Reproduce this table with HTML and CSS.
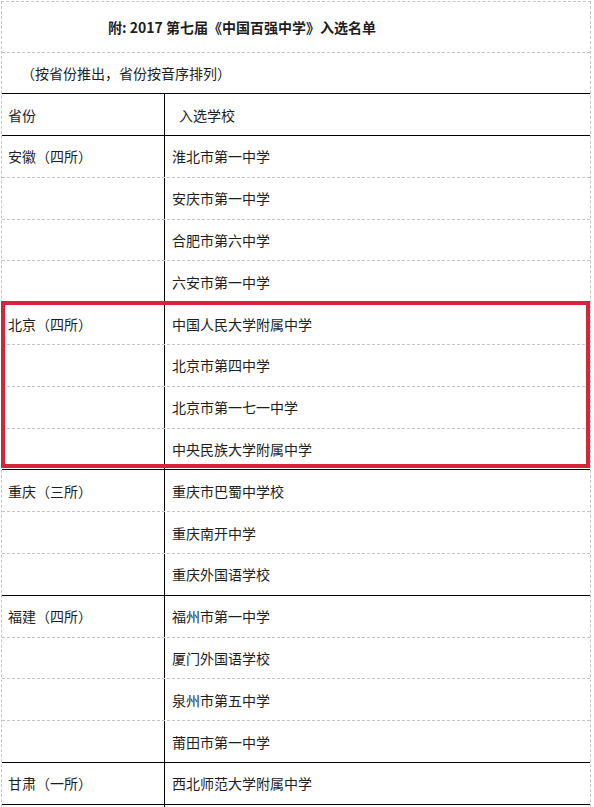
FILE: index.html
```html
<!DOCTYPE html>
<html lang="zh-CN">
<head>
<meta charset="utf-8">
<title>2017 第七届《中国百强中学》入选名单</title>
<link rel="stylesheet" href="styles.css">
</head>
<body>
<div class="sheet">
  <div class="title">附: 2017 第七届《中国百强中学》入选名单</div>
  <div class="subtitle">（按省份推出，省份按音序排列）</div>
  <div class="row head end">
    <div class="prov">省份</div>
    <div class="school">入选学校</div>
  </div>

  <div class="row"><div class="prov">安徽（四所）</div><div class="school">淮北市第一中学</div></div>
  <div class="row"><div class="prov"></div><div class="school">安庆市第一中学</div></div>
  <div class="row"><div class="prov"></div><div class="school">合肥市第六中学</div></div>
  <div class="row end"><div class="prov"></div><div class="school">六安市第一中学</div></div>

  <div class="row"><div class="prov">北京（四所）</div><div class="school">中国人民大学附属中学</div></div>
  <div class="row"><div class="prov"></div><div class="school">北京市第四中学</div></div>
  <div class="row"><div class="prov"></div><div class="school">北京市第一七一中学</div></div>
  <div class="row end"><div class="prov"></div><div class="school">中央民族大学附属中学</div></div>

  <div class="row"><div class="prov">重庆（三所）</div><div class="school">重庆市巴蜀中学校</div></div>
  <div class="row"><div class="prov"></div><div class="school">重庆南开中学</div></div>
  <div class="row end"><div class="prov"></div><div class="school">重庆外国语学校</div></div>

  <div class="row"><div class="prov">福建（四所）</div><div class="school">福州市第一中学</div></div>
  <div class="row"><div class="prov"></div><div class="school">厦门外国语学校</div></div>
  <div class="row"><div class="prov"></div><div class="school">泉州市第五中学</div></div>
  <div class="row end"><div class="prov"></div><div class="school">莆田市第一中学</div></div>

  <div class="row end"><div class="prov">甘肃（一所）</div><div class="school">西北师范大学附属中学</div></div>

  <div class="row"><div class="prov"></div><div class="school"></div></div>

  <div class="highlight"></div>
</div>
</body>
</html>
```

FILE: styles.css
```css
* {
  box-sizing: border-box;
}

html, body {
  margin: 0;
  padding: 0;
  background: #ffffff;
}

body {
  font-family: "Noto Sans CJK SC", "Noto Sans", sans-serif;
  font-size: 14px;
  color: #1e1e1e;
  overflow: hidden;
}

.sheet {
  position: relative;
  width: 590px;
  margin: 1px 0 0 1px;
  border-top: 1px dashed #c6c6c6;
  border-left: 1px dashed #c6c6c6;
  border-right: 1px dashed #c6c6c6;
}

.title {
  height: 51px;
  display: flex;
  align-items: center;
  padding-left: 106px;
  font-weight: bold;
  border-bottom: 1px dashed #c6c6c6;
}

.subtitle {
  height: 41px;
  display: flex;
  align-items: center;
  padding-left: 19px;
  border-bottom: 1px solid #000000;
}

.row {
  display: grid;
  grid-template-columns: 163px 1fr;
  height: 41.8px;
  border-bottom: 1px dashed #c6c6c6;
}

.row.head {
  height: 42px;
}

.row.end {
  border-bottom: 1px solid #000000;
}

.prov {
  display: flex;
  align-items: center;
  padding-left: 6px;
  border-right: 1px solid #000000;
}

.school {
  display: flex;
  align-items: center;
  padding-left: 7px;
}

.head .school {
  padding-left: 14px;
}

.highlight {
  position: absolute;
  left: -1px;
  top: 299px;
  width: 589px;
  height: 167px;
  border: 4px solid #d3263a;
  pointer-events: none;
}
```
